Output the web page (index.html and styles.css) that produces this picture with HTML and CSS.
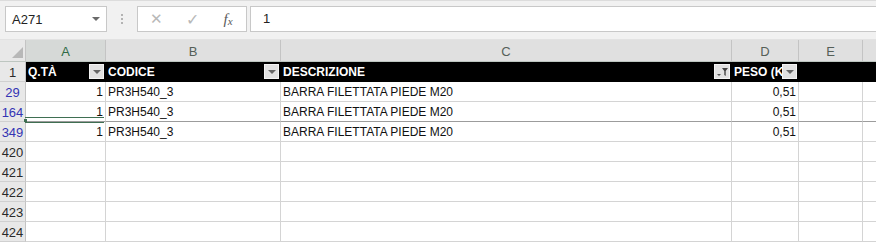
FILE: index.html
```html
<!DOCTYPE html>
<html lang="it">
<head>
    <meta charset="UTF-8">
    <title>Foglio1</title>
    <link rel="stylesheet" href="styles.css">
</head>
<body>
    <div class="formula-bar">
        <div class="name-box">
            <span>A271</span>
            <span class="caret"></span>
        </div>
        <div class="grip"><i></i><i></i><i></i></div>
        <div class="fx-buttons">
            <span class="fx-btn">&#x2715;</span>
            <span class="fx-btn check">&#x2713;</span>
            <span class="fx-btn fx">f<span class="x">x</span></span>
        </div>
        <div class="formula-input">1</div>
    </div>

    <div class="sheet">
        <!-- column letters -->
        <div class="col-head corner"><span class="tri"></span></div>
        <div class="col-head active">A</div>
        <div class="col-head">B</div>
        <div class="col-head">C</div>
        <div class="col-head">D</div>
        <div class="col-head">E</div>
        <div class="col-head last"></div>

        <!-- table header -->
        <div class="row-head">1</div>
        <div class="cell th"><span class="label">Q.TÀ</span><span class="filter"><span class="arrow"></span></span></div>
        <div class="cell th"><span class="label">CODICE</span><span class="filter"><span class="arrow"></span></span></div>
        <div class="cell th"><span class="label">DESCRIZIONE</span>
            <span class="filter active">
                <svg width="13" height="13" viewBox="0 0 13 13">
                    <path d="M1 9h4l-2 2z" fill="#555"/>
                    <path d="M6 3h6l-2.3 3v5l-1.4-1V6z" fill="#444"/>
                </svg>
            </span>
        </div>
        <div class="cell th"><span class="label">PESO (K</span><span class="filter"><span class="arrow"></span></span></div>
        <div class="cell th"></div>
        <div class="cell th last"></div>

        <div class="row-head filtered">29</div>
        <div class="cell num">1</div>
        <div class="cell">PR3H540_3</div>
        <div class="cell">BARRA FILETTATA PIEDE M20</div>
        <div class="cell num">0,51</div>
        <div class="cell"></div>
        <div class="cell last"></div>

        <div class="row-head filtered">164</div>
        <div class="cell num hidden-below selected">1</div>
        <div class="cell hidden-below">PR3H540_3</div>
        <div class="cell hidden-below">BARRA FILETTATA PIEDE M20</div>
        <div class="cell num hidden-below">0,51</div>
        <div class="cell hidden-below"></div>
        <div class="cell hidden-below last"></div>

        <div class="row-head filtered">349</div>
        <div class="cell num">1</div>
        <div class="cell">PR3H540_3</div>
        <div class="cell">BARRA FILETTATA PIEDE M20</div>
        <div class="cell num">0,51</div>
        <div class="cell"></div>
        <div class="cell last"></div>

        <div class="row-head">420</div>
        <div class="cell"></div><div class="cell"></div><div class="cell"></div><div class="cell"></div><div class="cell"></div><div class="cell last"></div>

        <div class="row-head">421</div>
        <div class="cell"></div><div class="cell"></div><div class="cell"></div><div class="cell"></div><div class="cell"></div><div class="cell last"></div>

        <div class="row-head">422</div>
        <div class="cell"></div><div class="cell"></div><div class="cell"></div><div class="cell"></div><div class="cell"></div><div class="cell last"></div>

        <div class="row-head">423</div>
        <div class="cell"></div><div class="cell"></div><div class="cell"></div><div class="cell"></div><div class="cell"></div><div class="cell last"></div>

        <div class="row-head">424</div>
        <div class="cell"></div><div class="cell"></div><div class="cell"></div><div class="cell"></div><div class="cell"></div><div class="cell last"></div>
    </div>
</body>
</html>
```

FILE: styles.css
```css
* {
    box-sizing: border-box;
}

body {
    margin: 0;
    background-color: #fff;
    font-family: "Liberation Sans", Arial, sans-serif;
    color: #000;
    overflow: hidden;
}

/* formula bar */

.formula-bar {
    display: flex;
    align-items: flex-start;
    height: 40px;
    padding-top: 6px;
    background-color: #f1f1f1;
    border-top: 1px solid #dcdcdc;
    border-bottom: 1px solid #e2e2e2;
}

.name-box {
    display: flex;
    align-items: center;
    justify-content: space-between;
    width: 102px;
    height: 26px;
    margin-left: 5px;
    margin-top: -1px;
    padding: 0 6px 0 6px;
    background-color: #fff;
    border: 1px solid #c8c8c8;
    font-size: 13px;
    color: #222;
}

.caret {
    width: 0;
    height: 0;
    border-left: 4px solid transparent;
    border-right: 4px solid transparent;
    border-top: 4px solid #6a6a6a;
}

.grip {
    display: flex;
    flex-direction: column;
    align-items: center;
    gap: 2px;
    width: 30px;
    padding-top: 7px;
}

.grip i {
    width: 2px;
    height: 2px;
    background-color: #b3b3b3;
}

.fx-buttons {
    display: flex;
    align-items: center;
    width: 110px;
    height: 26px;
    margin-top: -1px;
    background-color: #fff;
    border: 1px solid #c8c8c8;
    color: #b8b8b8;
    font-size: 15px;
}

.fx-btn {
    width: 36px;
    text-align: center;
}

.fx-btn.check {
    font-size: 16px;
}

.fx-btn.fx {
    font-family: "Liberation Serif", "Times New Roman", serif;
    font-style: italic;
    font-size: 15px;
    color: #5a5a5a;
}

.fx-btn.fx .x {
    font-size: 11px;
    position: relative;
    top: 1px;
}

.formula-input {
    flex: 1;
    height: 26px;
    margin-top: -1px;
    margin-left: 3px;
    padding: 4px 0 0 12px;
    background-color: #fff;
    border: 1px solid #c8c8c8;
    border-right: none;
    font-size: 13px;
    color: #222;
}

/* sheet grid */

.sheet {
    display: grid;
    grid-template-columns: 26px 80px 175px 451px 67px 64px 1fr;
    grid-template-rows: 22px repeat(9, 20px);
    font-size: 12px;
}

.col-head {
    display: flex;
    align-items: center;
    justify-content: center;
    padding-top: 1px;
    background-color: #e0e0e0;
    border-right: 1px solid #c4c4c4;
    border-bottom: 1px solid #bdc6c0;
    color: #555f58;
    font-size: 13px;
}

.col-head.active {
    background-color: #d6d9d7;
    color: #2f6a45;
}

.col-head.corner {
    position: relative;
    background-color: #e8e8e8;
}

.col-head.corner .tri {
    position: absolute;
    right: 2px;
    bottom: 3px;
    width: 0;
    height: 0;
    border-left: 11px solid transparent;
    border-bottom: 11px solid #b8b8b8;
}

.col-head.last {
    border-right: none;
}

.row-head {
    display: flex;
    align-items: center;
    justify-content: center;
    padding-top: 1px;
    background-color: #e8e8e8;
    border-right: 1px solid #c4c4c4;
    border-bottom: 1px solid #d0d0d0;
    font-size: 13px;
    color: #2a2a2a;
}

.row-head.filtered {
    color: #3434b4;
}

.cell {
    display: flex;
    align-items: center;
    padding: 1px 2px 0 2px;
    border-right: 1px solid #d4d4d4;
    border-bottom: 1px solid #d4d4d4;
    white-space: nowrap;
    overflow: hidden;
    color: #111;
}

.cell.last {
    border-right: none;
}

.cell.num {
    justify-content: flex-end;
}

.cell.hidden-below {
    border-bottom-color: #9c9c9c;
}

.cell.selected {
    position: relative;
    overflow: visible;
}

.cell.selected::after {
    content: "";
    position: absolute;
    left: -1px;
    right: 1px;
    bottom: -2px;
    height: 4px;
    border-top: 1px solid #3f6f52;
    border-bottom: 1px solid #3f6f52;
}

.cell.selected::before {
    content: "";
    position: absolute;
    left: -2px;
    bottom: -1px;
    width: 3px;
    height: 3px;
    background-color: #3f6f52;
}

/* table header row */

.cell.th {
    background-color: #000;
    border-right-color: #000;
    border-bottom-color: #000;
    color: #fff;
    font-weight: bold;
    padding-right: 1px;
}

.th .label {
    flex: 1;
    min-width: 0;
    overflow: hidden;
}

.filter {
    display: flex;
    align-items: center;
    justify-content: center;
    flex: none;
    width: 15px;
    height: 15px;
    margin-top: -1px;
    background-color: #e1e1e1;
    border: 1px solid #f4f4f4;
}

.filter .arrow {
    width: 0;
    height: 0;
    border-left: 4px solid transparent;
    border-right: 4px solid transparent;
    border-top: 4px solid #666;
}

.filter.active {
    width: 16px;
}
```
